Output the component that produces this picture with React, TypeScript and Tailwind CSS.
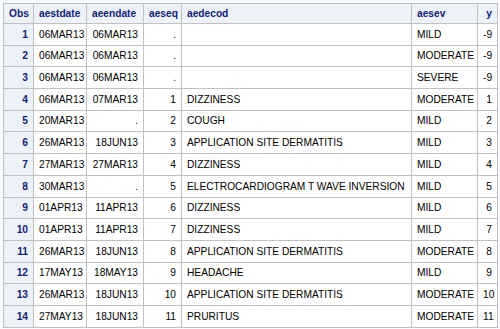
const rows: [number, string, string, string, string, string, string][] = [
  [1, '06MAR13', '06MAR13', '.', '', 'MILD', '-9'],
  [2, '06MAR13', '06MAR13', '.', '', 'MODERATE', '-9'],
  [3, '06MAR13', '06MAR13', '.', '', 'SEVERE', '-9'],
  [4, '06MAR13', '07MAR13', '1', 'DIZZINESS', 'MODERATE', '1'],
  [5, '20MAR13', '.', '2', 'COUGH', 'MILD', '2'],
  [6, '26MAR13', '18JUN13', '3', 'APPLICATION SITE DERMATITIS', 'MILD', '3'],
  [7, '27MAR13', '27MAR13', '4', 'DIZZINESS', 'MILD', '4'],
  [8, '30MAR13', '.', '5', 'ELECTROCARDIOGRAM T WAVE INVERSION', 'MILD', '5'],
  [9, '01APR13', '11APR13', '6', 'DIZZINESS', 'MILD', '6'],
  [10, '01APR13', '11APR13', '7', 'DIZZINESS', 'MILD', '7'],
  [11, '26MAR13', '18JUN13', '8', 'APPLICATION SITE DERMATITIS', 'MODERATE', '8'],
  [12, '17MAY13', '18MAY13', '9', 'HEADACHE', 'MILD', '9'],
  [13, '26MAR13', '18JUN13', '10', 'APPLICATION SITE DERMATITIS', 'MODERATE', '10'],
  [14, '27MAY13', '18JUN13', '11', 'PRURITUS', 'MODERATE', '11'],
];

export default function App() {
  const th = 'border border-[#c1c1c1] bg-[#edf2f9] text-[#112277] font-bold text-left px-[5px] p-0';
  const td = 'border border-[#c1c1c1] bg-white text-black px-[5px] p-0';

  return (
    <div className="w-[500px] h-[329px] bg-[#fafbfe] pt-[3px] pl-[3px] font-['Liberation_Sans',Arial,sans-serif] text-[10.2px] overflow-hidden">
      <table className="table-fixed border-collapse border border-[#c1c1c1] w-[494px]">
        <colgroup>
          <col className="w-[30px]" />
          <col className="w-[53px]" />
          <col className="w-[57px]" />
          <col className="w-[38px]" />
          <col className="w-[230px]" />
          <col className="w-[66px]" />
          <col className="w-[20px]" />
        </colgroup>
        <thead>
          <tr className="h-[20px]">
            <th className={th + ' text-right'}>Obs</th>
            <th className={th}>aestdate</th>
            <th className={th}>aeendate</th>
            <th className={th}>aeseq</th>
            <th className={th}>aedecod</th>
            <th className={th}>aesev</th>
            <th className={th + ' text-right px-[3px]'}>y</th>
          </tr>
        </thead>
        <tbody>
          {rows.map((r) => (
            <tr key={r[0]} className="h-[21.7px]">
              <th className={th + ' text-right'}>{r[0]}</th>
              <td className={td + ' text-right whitespace-nowrap'}>{r[1]}</td>
              <td className={td + ' text-right whitespace-nowrap'}>{r[2]}</td>
              <td className={td + ' text-right'}>{r[3]}</td>
              <td className={td + ' whitespace-nowrap'}>{r[4]}</td>
              <td className={td}>{r[5]}</td>
              <td className={td + ' text-right px-[3px]'}>{r[6]}</td>
            </tr>
          ))}
        </tbody>
      </table>
    </div>
  );
}
